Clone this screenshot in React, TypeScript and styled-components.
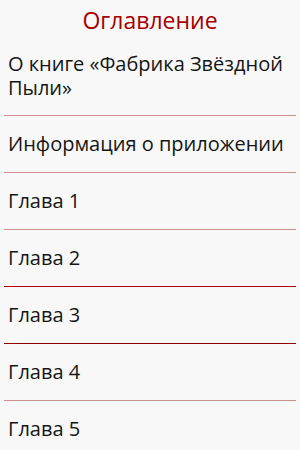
import React from "react";
import styled, { createGlobalStyle } from "styled-components";

const GlobalStyle = createGlobalStyle`
  html, body {
    margin: 0;
    padding: 0;
    background: #f8f8f8;
  }
  body {
    font-family: "Open Sans", "Noto Sans", sans-serif;
  }
`;

type Tone = "soft" | "red" | "dark";

const toneColors: Record<Tone, string> = {
  soft: "#cc8f8f",
  red: "#b30000",
  dark: "#8e0000",
};

const Page = styled.div`
  width: 300px;
  min-height: 450px;
  background: #f8f8f8;
  display: flex;
  flex-direction: column;
`;

const Title = styled.h1`
  margin: 0;
  height: 37px;
  padding-top: 3px;
  box-sizing: border-box;
  display: flex;
  align-items: center;
  justify-content: center;
  font-size: 23px;
  font-weight: 400;
  color: #a80000;
`;

const List = styled.ul`
  list-style: none;
  margin: 0;
  padding: 0;
`;

const Item = styled.li`
  min-height: 56px;
  box-sizing: border-box;
  padding: 15px 8px;
  display: flex;
  align-items: center;
  font-size: 20px;
  line-height: 24px;
  color: #151515;
`;

const Divider = styled.div<{ $tone: Tone }>`
  height: 1px;
  margin: 0 4px;
  background: ${(p) => toneColors[p.$tone]};
`;

const entries: { label: string; tone: Tone }[] = [
  { label: "О книге «Фабрика Звёздной Пыли»", tone: "soft" },
  { label: "Информация о приложении", tone: "soft" },
  { label: "Глава 1", tone: "soft" },
  { label: "Глава 2", tone: "red" },
  { label: "Глава 3", tone: "dark" },
  { label: "Глава 4", tone: "soft" },
  { label: "Глава 5", tone: "soft" },
];

export default function App() {
  return (
    <Page>
      <GlobalStyle />
      <Title>Оглавление</Title>
      <List>
        {entries.map((e, i) => (
          <React.Fragment key={e.label}>
            <Item>{e.label}</Item>
            {i < entries.length - 1 && <Divider $tone={e.tone} />}
          </React.Fragment>
        ))}
      </List>
    </Page>
  );
}
